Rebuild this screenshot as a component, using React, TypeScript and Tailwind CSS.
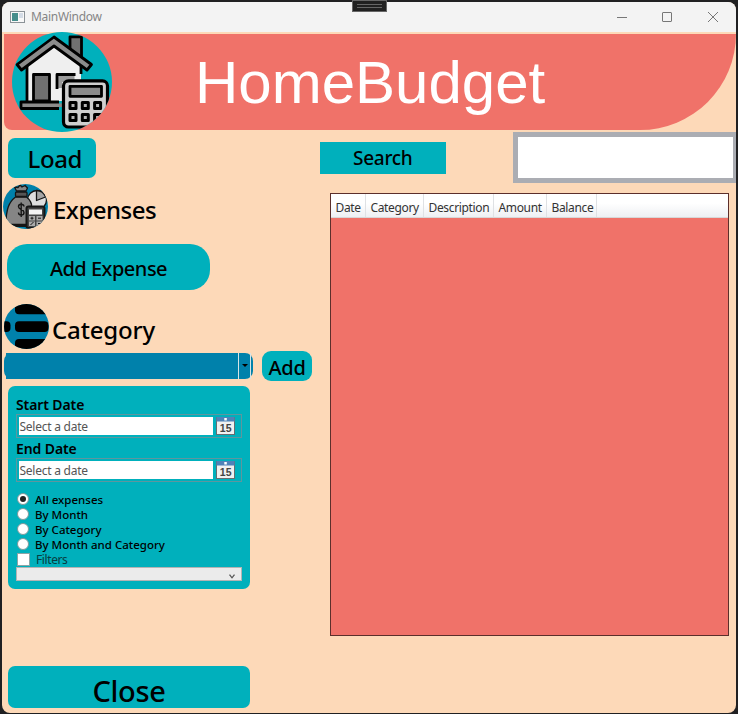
import React from "react";

function HomeLogo() {
  return (
    <svg className="block h-[100px] w-[100px]" viewBox="12 32 100 100">
      <defs>
        <clipPath id="home-clip">
          <circle cx="62" cy="82" r="50" />
        </clipPath>
      </defs>
      <circle cx="62" cy="82" r="50" fill="#00b0bc" />
      <g clipPath="url(#home-clip)" stroke="#000" strokeWidth="2.800" strokeLinejoin="round">
        <path d="M70 52V36.800H81.500V62Z" fill="#707070" />
        <path d="M27 101V65L54 43L81 65V101Z" fill="#efefef" stroke="none" />
        <path d="M27 66V101M81 66V74" fill="none" />
        <path d="M54 37L17 64.500L21.500 70L54 46L87 70L91.500 64.500Z" fill="#8b8b8b" />
        <path d="M33.500 101V74.500H49.500V101Z" fill="#707070" />
        <path d="M57 88V74.500H74.500V82H62V88Z" fill="#9b9b9b" stroke="none" />
        <path d="M57 89V74.500H75.500" fill="none" />
        <path d="M59 102H21V108.500H59" fill="#8b8b8b" />
        <path d="M59 103.500H62V107H59Z" fill="#8b8b8b" stroke="none" />
        <rect x="63.500" y="80.800" width="44" height="46.200" rx="5" fill="#cfcfcf" strokeWidth="3.200" />
        <rect x="70" y="86.300" width="31.500" height="10" fill="#8b8b8b" />
        <g fill="#b5b5b5" strokeWidth="3">
          <rect x="70" y="102.500" width="6" height="6" />
          <rect x="82.300" y="102.500" width="6" height="6" />
          <rect x="94.600" y="102.500" width="6" height="6" />
          <rect x="70" y="114.500" width="6" height="6" />
          <rect x="82.300" y="114.500" width="6" height="6" />
          <rect x="94.600" y="114.500" width="6" height="6" />
        </g>
      </g>
    </svg>
  );
}

function ExpensesIcon() {
  return (
    <svg className="block h-[45px] w-[45px]" viewBox="3 184 45 45">
      <defs>
        <clipPath id="expenses-clip">
          <circle cx="25.500" cy="206.500" r="22.500" />
        </clipPath>
      </defs>
      <circle cx="25.500" cy="206.500" r="22.500" fill="#0081ab" />
      <g clipPath="url(#expenses-clip)" stroke="#151515" strokeWidth="1.300" strokeLinejoin="round">
        <circle cx="37" cy="200" r="9.500" fill="#dedede" />
        <path d="M36.500 190.500V200.500L45.500 197C44 192.500 41 190.500 36.500 190.500Z" fill="#a4a4a4" />
        <path d="M15.500 197C9 202 6 209 6 224.500H31V207C33 204 29 199 26.500 197Z" fill="#858585" />
        <path d="M16.500 191L14.500 187L18 187.500L20 185L22 187L25 185.500L27.500 188L26 191Z" fill="#858585" />
        <rect x="15.500" y="192" width="11.500" height="4.500" rx="1" fill="#555" />
        <path d="M24 206.500C23.500 203.500 18.500 203.500 18.500 206.800C18.500 210 24 209 24 212.500C24 216 18.500 216 18.500 212.500M21.200 202.500V217" fill="none" strokeWidth="1.400" />
        <path d="M6 225.500H28" strokeWidth="3" />
        <rect x="26.500" y="206.500" width="18" height="21.500" rx="2" fill="#444" strokeWidth="2" />
        <rect x="29" y="209.500" width="13" height="5" fill="#f4f4f4" stroke="none" />
        <g fill="#aaa" stroke="none">
          <rect x="29" y="216" width="6" height="4.500" />
          <rect x="36.500" y="216" width="6" height="4.500" />
          <rect x="29" y="221.500" width="6" height="4.500" />
          <rect x="36.500" y="221.500" width="6" height="4.500" />
        </g>
        <path d="M30.500 218.200H33.500M32 216.700V219.700M38 218.200H41M30.500 225L33.500 222M38 223.500H41" strokeWidth="1" />
      </g>
    </svg>
  );
}

function CategoryIcon() {
  return (
    <svg className="block h-[45px] w-[45px]" viewBox="0 0 45 45">
      <defs>
        <clipPath id="category-clip">
          <circle cx="22.500" cy="22.500" r="22.500" />
        </clipPath>
      </defs>
      <g clipPath="url(#category-clip)">
        <rect width="45" height="45" fill="#0081ab" />
        <rect x="11" y="-1" width="40" height="11.300" rx="4" />
        <rect x="11" y="17.300" width="33.500" height="10.700" rx="4" />
        <rect x="11" y="35" width="40" height="12" rx="4" />
        <rect x="-3" y="17.300" width="9.500" height="10.700" rx="4" />
      </g>
    </svg>
  );
}

function CalendarIcon() {
  return (
    <svg className="block h-[18px] w-[19px]" viewBox="0 0 19 18">
      <rect x=".5" y=".5" width="18" height="17" fill="#f1f1f1" stroke="#686c70" />
      <rect x=".5" y="0" width="18" height="4.500" fill="#4f82b8" />
      <rect x="8.300" y="1" width="2.500" height="2.500" fill="#fff" />
      <text x="9.700" y="15.200" textAnchor="middle" fontFamily="Liberation Sans, sans-serif" fontWeight="bold" fontSize="10.500" fill="#444">15</text>
    </svg>
  );
}

function DateField() {
  return (
    <div className="flex h-6 w-[226px] items-center border border-[#5e969e] pl-[1.500px]">
      <div className="flex h-[18.500px] w-[194.500px] items-center bg-white pl-[1px] pt-[2px] text-[12px] leading-none tracking-[-0.25px] text-[#555]">
        Select a date
      </div>
      <div className="ml-[2.500px]">
        <CalendarIcon />
      </div>
    </div>
  );
}

function Radio({ label, checked = false }: { label: string; checked?: boolean }) {
  return (
    <div className="flex h-[15px] items-center">
      <span className="flex h-3 w-3 items-center justify-center rounded-full border border-[#7f9a9c] bg-white">
        {checked && <span className="h-1.5 w-1.5 rounded-full bg-[#212121]" />}
      </span>
      <span className="ml-[6px] whitespace-nowrap pt-[1px] text-[11.500px] font-medium leading-[15px]">{label}</span>
    </div>
  );
}

function TitleBar() {
  return (
    <div className="flex h-[30px] shrink-0 items-center bg-[#f3f3f3] pl-2">
      <svg className="h-3 w-[15px]" viewBox="0 0 15 12">
        <rect x=".5" y=".5" width="14" height="11" fill="#f8f8f8" stroke="#8b9297" />
        <rect x="2" y="2" width="6" height="8" fill="#468e8c" />
        <rect x="9" y="2" width="4" height="5" fill="#d4dce6" />
      </svg>
      <span className="ml-[6px] text-[12px] tracking-[-0.3px] text-[#858585]">MainWindow</span>
      <svg className="ml-auto mr-[17px] h-3 w-[104px]" viewBox="0 0 104 12" fill="none" stroke="#777">
        <path d="M2 6.500H12" />
        <rect x="47.500" y="1.500" width="9" height="9" rx=".5" />
        <path d="M93 1L103 11M103 1L93 11" />
      </svg>
    </div>
  );
}

const columns = [
  { name: "Date", box: "w-[35px]" },
  { name: "Category", box: "w-[58px]" },
  { name: "Description", box: "w-[70px]" },
  { name: "Amount", box: "w-[53px]" },
  { name: "Balance", box: "w-[50px]" },
];

export default function App() {
  return (
    <div className="relative h-[714px] w-[738px] overflow-hidden bg-[#202022] pl-[2px] pt-[2px] font-['Noto_Sans','Open_Sans',sans-serif] text-black">
      <div className="flex h-[711px] w-[734px] flex-col overflow-hidden rounded-lg bg-[#fdd9b8]">
        <TitleBar />
        <header className="ml-[2px] mt-[2px] flex h-[95.500px] shrink-0 items-center rounded-bl-[8px] rounded-br-[97px] bg-[#f07269]">
          <div className="ml-2">
            <HomeLogo />
          </div>
          <h1 className="ml-[83px] pt-[3px] font-['Liberation_Sans',Arial,sans-serif] text-[60px] leading-none text-white">HomeBudget</h1>
        </header>
        <main className="flex min-h-0 flex-1">
          <section className="flex w-[311px] shrink-0 flex-col pl-[2px]">
            <div className="ml-1 mt-2 flex h-10 w-[88px] shrink-0 items-center rounded-[7px] bg-[#00b0bc] pl-[19.500px] pt-[3px] text-[24px] font-medium leading-none tracking-[-0.4px]">
              Load
            </div>
            <div className="-ml-[1px] mt-[6px] flex h-[45px] shrink-0">
              <ExpensesIcon />
              <h2 className="ml-[5px] mt-[9.500px] text-[24px] font-medium leading-[33px] tracking-[-0.5px]">Expenses</h2>
            </div>
            <div className="ml-[3px] mt-[15.500px] flex h-[46px] w-[203px] shrink-0 items-center justify-center rounded-[20px] bg-[#00b0bc] pt-[3px] text-[20px] font-medium leading-none tracking-[-0.5px]">
              Add Expense
            </div>
            <div className="mt-[13.500px] flex h-[45px] shrink-0">
              <CategoryIcon />
              <h2 className="ml-[3px] mt-[9.500px] text-[24px] font-medium leading-[33px] tracking-[-0.15px]">Category</h2>
            </div>
            <div className="mt-[2px] flex h-[30px] shrink-0 items-center">
              <div className="flex h-[26px] w-[249px] rounded-[8px] bg-[#0081ab] pl-[2px]">
                <div className="w-[231px] bg-[#0081ab]" />
                <div className="ml-[1px] flex w-[13px] items-center justify-center border-x border-[#d5e4e6]">
                  <svg className="h-[3px] w-[6px]" viewBox="0 0 6 3">
                    <path d="M0 0H6L3 3Z" />
                  </svg>
                </div>
              </div>
              <div className="ml-[9px] flex h-[30px] w-[50px] items-center justify-center rounded-[9px] bg-[#00b0bc] pt-[5px] text-[20px] font-medium leading-none tracking-[-0.3px]">
                Add
              </div>
            </div>
            <div className="ml-1 mt-[5.500px] flex h-[203px] w-[242px] shrink-0 flex-col rounded-[7px] bg-[#00b0bc] pl-2 pt-[10px]">
              <div className="h-[18px] text-[14px] font-semibold leading-[18px] tracking-[-0.1px]">Start Date</div>
              <DateField />
              <div className="mt-[2px] h-[18px] text-[14px] font-semibold leading-[18px] tracking-[-0.1px]">End Date</div>
              <DateField />
              <div className="ml-[1px] mt-[9.500px]">
                <Radio label="All expenses" checked />
                <Radio label="By Month" />
                <Radio label="By Category" />
                <Radio label="By Month and Category" />
              </div>
              <div className="ml-[1px] mt-[0.500px] flex h-[14px] items-center">
                <span className="h-[13px] w-[13px] border border-[#8ba4a6] bg-white" />
                <span className="ml-[6px] pt-[1px] text-[12px] leading-none tracking-[-0.4px] text-[#083d41]">Filters</span>
              </div>
              <div className="mt-[0.500px] flex h-[14.500px] w-[226px] items-end justify-end border border-[#b4b4b4] bg-[#ebebeb] pb-px pr-[6px]">
                <svg className="h-[5px] w-[6px]" viewBox="0 0 6 5" fill="none" stroke="#555" strokeWidth="1.300">
                  <path d="M.5 .7L3 3.800L5.500 .7" />
                </svg>
              </div>
            </div>
            <div className="ml-1 mt-[77px] flex h-[42px] w-[242px] shrink-0 items-center justify-center rounded-[7px] bg-[#00b0bc] pt-[7px] text-[29px] font-medium leading-none tracking-[-0.3px]">
              Close
            </div>
          </section>
          <section className="flex flex-1 flex-col">
            <div className="flex h-[53px] shrink-0 justify-between pl-[6.500px] pt-[2.500px]">
              <div className="mt-[10px] flex h-[31.500px] w-[126.500px] items-center justify-center bg-[#00b0bc] pt-[2px] text-[19px] font-medium leading-none tracking-[-0.3px]">
                Search
              </div>
              <div className="h-[51px] w-[223.500px] border-[5px] border-r-[3px] border-[#abadb3] bg-white" />
            </div>
            <div className="ml-[17px] mt-[10.500px] flex h-[443px] w-[399px] shrink-0 flex-col border border-[#5c2f2b] bg-[#f07269]">
              <div className="flex h-6 border-b border-[#d8d8d8] bg-linear-to-b from-white from-40% to-[#eef0f3] text-[12px] leading-[27px] tracking-[-0.35px] text-[#333]">
                {columns.map((c) => (
                  <div key={c.name} className={`${c.box} shrink-0 whitespace-nowrap border-r border-[#dfe1e4] pl-[4.500px]`}>
                    {c.name}
                  </div>
                ))}
              </div>
            </div>
          </section>
        </main>
      </div>
      <div className="absolute left-[352px] top-0 flex h-3 w-[35px] items-center justify-center border border-[#666] bg-[#202020]">
        <span className="h-1 w-[25px] border-y border-[#666]" />
      </div>
    </div>
  );
}
